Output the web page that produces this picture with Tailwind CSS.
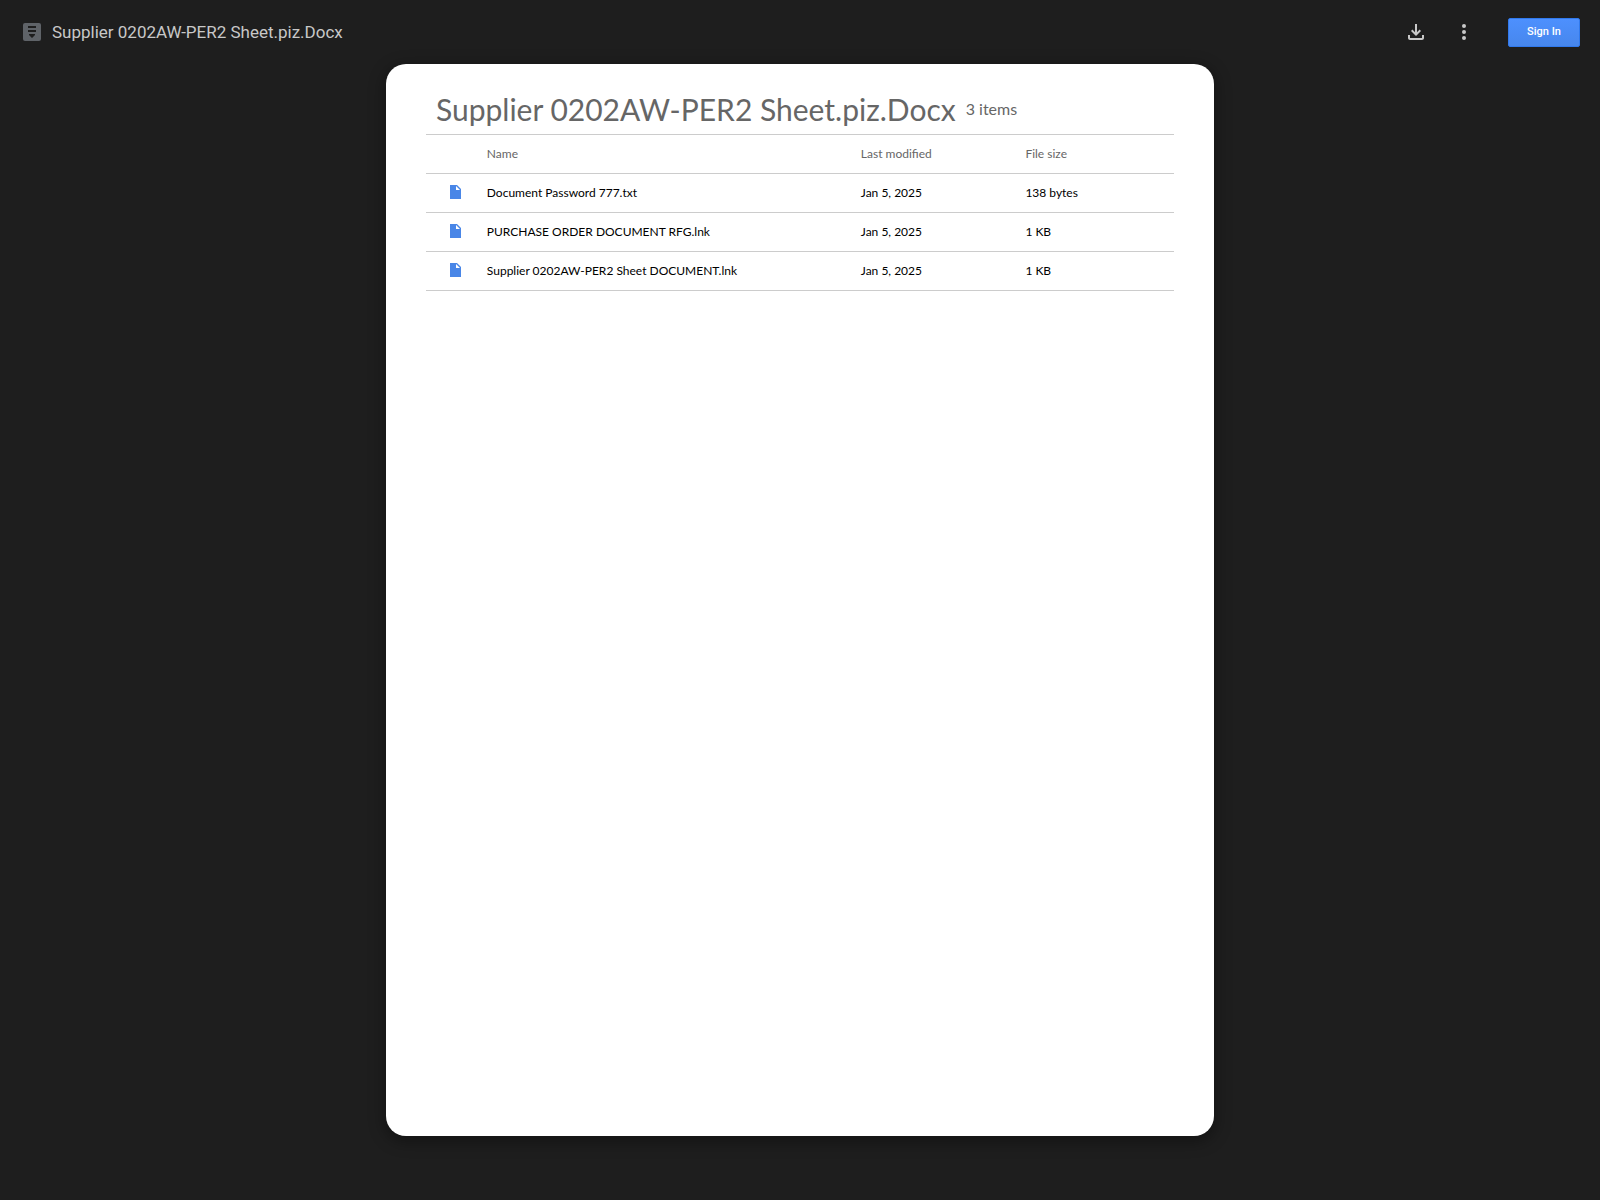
<!DOCTYPE html>
<html lang="en">
<head>
<meta charset="utf-8">
<meta name="viewport" content="width=device-width, initial-scale=1">
<title>Supplier 0202AW-PER2 Sheet.piz.Docx</title>
<script src="https://cdn.jsdelivr.net/npm/@tailwindcss/browser@4"></script>
</head>
<body class="flex min-h-screen flex-col bg-[#1e1e1e] font-[Lato,sans-serif]">
<svg class="hidden" aria-hidden="true">
  <symbol id="file" viewBox="0 0 11 14"><path fill="#4986e7" d="M0 0h7l4 4v10H0zM6 1v4h4z" fill-rule="evenodd"/></symbol>
</svg>
<header class="flex h-16 items-center pr-5 pl-[23px] font-[Roboto,sans-serif]">
  <svg class="size-[18px] shrink-0" viewBox="0 0 18 18" aria-hidden="true"><rect width="18" height="18" rx="2" fill="#5f6368"/><path fill="#1e1e1e" d="M5 3h8v2H5zM5 7h8v2H5zM6 11h6v1l-3 3-3-3z"/></svg>
  <h1 class="ml-[11px] truncate pb-px text-[17px] leading-6 text-[#c8c8c8]">Supplier 0202AW-PER2 Sheet.piz.Docx</h1>
  <div class="ml-auto flex shrink-0 items-center">
    <button type="button" aria-label="Download" class="flex size-12 items-center justify-center"><svg class="size-6" viewBox="0 0 24 24" fill="#c8c8c8"><path d="M18 15v3H6v-3H4v3c0 1.100.9 2 2 2h12c1.100 0 2-.9 2-2v-3h-2zM17 11l-1.410-1.410L13 12.170V4h-2v8.170L8.410 9.590 7 11l5 5 5-5z"/></svg></button>
    <button type="button" aria-label="More actions" class="flex size-12 items-center justify-center"><svg class="size-6" viewBox="0 0 24 24" fill="#c8c8c8"><circle cx="12" cy="6" r="2"/><circle cx="12" cy="12" r="2"/><circle cx="12" cy="18" r="2"/></svg></button>
    <a href="#" class="ml-5 flex h-[29px] w-[72px] items-center justify-center rounded-xs border border-[#3079ed] bg-linear-to-b from-[#4d90fe] to-[#4787ed] pt-px text-[11px] font-medium text-white">Sign In</a>
  </div>
</header>
<main class="mx-auto mb-16 min-h-[calc(100vh-128px)] w-full max-w-[828px] rounded-[20px] bg-white px-10 pt-5 shadow-[0_4px_15px_2px_rgba(0,0,0,0.35)]">
  <div class="flex h-[50px] items-center gap-[10px] px-[10px] pb-px text-[#666]">
    <h2 class="text-[30px] leading-10">Supplier 0202AW-PER2 Sheet.piz.Docx</h2>
    <span class="shrink-0 text-base">3 items</span>
  </div>
  <table class="w-full table-fixed border-collapse text-left text-xs text-black">
    <colgroup><col class="w-[8%]"><col class="w-[50%]"><col class="w-[22%]"><col class="w-[20%]"></colgroup>
    <thead>
      <tr class="h-[39px] border-y border-[#ccc] text-[#666]"><td></td><th class="pl-px font-normal">Name</th><th class="pl-px font-normal">Last modified</th><th class="pl-px font-normal">File size</th></tr>
    </thead>
    <tbody>
      <tr class="h-[39px] border-b border-[#ccc]"><td><svg class="mx-auto mb-[2px] h-[14px] w-[11px]" aria-hidden="true"><use href="#file"/></svg></td><td class="pl-px">Document Password 777.txt</td><td class="pl-px">Jan 5, 2025</td><td class="pl-px">138 bytes</td></tr>
      <tr class="h-[39px] border-b border-[#ccc]"><td><svg class="mx-auto mb-[2px] h-[14px] w-[11px]" aria-hidden="true"><use href="#file"/></svg></td><td class="pl-px">PURCHASE ORDER DOCUMENT RFG.lnk</td><td class="pl-px">Jan 5, 2025</td><td class="pl-px">1 KB</td></tr>
      <tr class="h-[39px] border-b border-[#ccc]"><td><svg class="mx-auto mb-[2px] h-[14px] w-[11px]" aria-hidden="true"><use href="#file"/></svg></td><td class="pl-px">Supplier 0202AW-PER2 Sheet DOCUMENT.lnk</td><td class="pl-px">Jan 5, 2025</td><td class="pl-px">1 KB</td></tr>
    </tbody>
  </table>
</main>
</body>
</html>
